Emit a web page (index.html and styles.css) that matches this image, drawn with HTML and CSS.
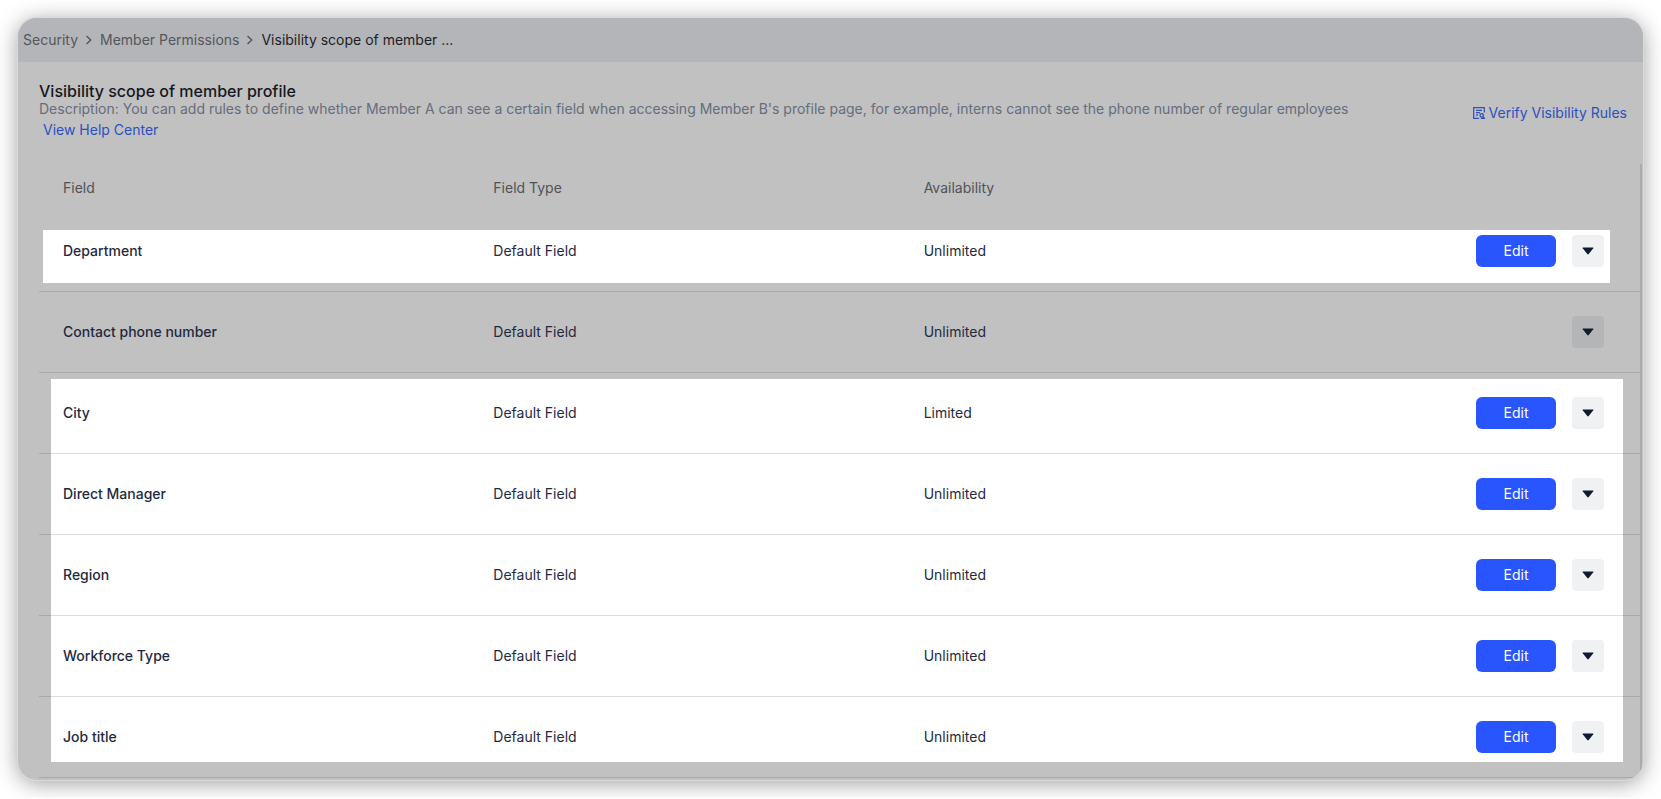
FILE: index.html
```html
<!DOCTYPE html>
<html lang="en">
  <head>
    <meta charset="utf-8">
    <title>Visibility scope of member profile</title>
    <link rel="stylesheet" href="styles.css">
  </head>
  <body>
    <main class="window">
      <nav class="crumbs" aria-label="Breadcrumb">
        <a href="#">Security</a>
        <svg class="chevron" viewBox="0 0 8 10"><path d="M1.5 1l4.2 4-4.2 4"/></svg>
        <a href="#">Member Permissions</a>
        <svg class="chevron" viewBox="0 0 8 10"><path d="M1.5 1l4.2 4-4.2 4"/></svg>
        <span class="current">Visibility scope of member ...</span>
      </nav>
      <header class="head">
        <div class="intro">
          <h1>Visibility scope of member profile</h1>
          <p>Description: You can add rules to define whether Member A can see a certain field when accessing Member B's profile page, for example, interns cannot see the phone number of regular employees</p>
          <a class="help" href="#">View Help Center</a>
        </div>
        <a class="verify" href="#">
          <svg viewBox="0 0 12 12"><path d="M11.3 5.5V.7H.7v10.6h5.2M3 3.3h6M3 5.6h4M3 7.9h2"/><circle cx="8.7" cy="8.4" r="1.7"/><path d="M9.9 9.7l1.7 1.7H8"/></svg>
          Verify Visibility Rules
        </a>
      </header>
      <div class="list">
        <div class="spot spot-first"></div>
        <div class="spot spot-rest"></div>
        <table>
          <thead>
            <tr><th>Field</th><th>Field Type</th><th>Availability</th><th class="tools"></th></tr>
          </thead>
          <tbody>
            <tr>
              <td class="name">Department</td><td>Default Field</td><td>Unlimited</td>
              <td class="tools"><div class="actions"><button class="edit">Edit</button><button class="more" aria-label="More"><svg viewBox="0 0 12 8"><path d="M1 .5h10q.8 0 .3.7L6.7 7q-.7.8-1.4 0L.7 1.2Q.2.5 1 .5z"/></svg></button></div></td>
            </tr>
            <tr>
              <td class="name">Contact phone number</td><td>Default Field</td><td>Unlimited</td>
              <td class="tools"><div class="actions"><button class="more dim" aria-label="More"><svg viewBox="0 0 12 8"><path d="M1 .5h10q.8 0 .3.7L6.7 7q-.7.8-1.4 0L.7 1.2Q.2.5 1 .5z"/></svg></button></div></td>
            </tr>
            <tr>
              <td class="name">City</td><td>Default Field</td><td>Limited</td>
              <td class="tools"><div class="actions"><button class="edit">Edit</button><button class="more" aria-label="More"><svg viewBox="0 0 12 8"><path d="M1 .5h10q.8 0 .3.7L6.7 7q-.7.8-1.4 0L.7 1.2Q.2.5 1 .5z"/></svg></button></div></td>
            </tr>
            <tr>
              <td class="name">Direct Manager</td><td>Default Field</td><td>Unlimited</td>
              <td class="tools"><div class="actions"><button class="edit">Edit</button><button class="more" aria-label="More"><svg viewBox="0 0 12 8"><path d="M1 .5h10q.8 0 .3.7L6.7 7q-.7.8-1.4 0L.7 1.2Q.2.5 1 .5z"/></svg></button></div></td>
            </tr>
            <tr>
              <td class="name">Region</td><td>Default Field</td><td>Unlimited</td>
              <td class="tools"><div class="actions"><button class="edit">Edit</button><button class="more" aria-label="More"><svg viewBox="0 0 12 8"><path d="M1 .5h10q.8 0 .3.7L6.7 7q-.7.8-1.4 0L.7 1.2Q.2.5 1 .5z"/></svg></button></div></td>
            </tr>
            <tr>
              <td class="name">Workforce Type</td><td>Default Field</td><td>Unlimited</td>
              <td class="tools"><div class="actions"><button class="edit">Edit</button><button class="more" aria-label="More"><svg viewBox="0 0 12 8"><path d="M1 .5h10q.8 0 .3.7L6.7 7q-.7.8-1.4 0L.7 1.2Q.2.5 1 .5z"/></svg></button></div></td>
            </tr>
            <tr>
              <td class="name">Job title</td><td>Default Field</td><td>Unlimited</td>
              <td class="tools"><div class="actions"><button class="edit">Edit</button><button class="more" aria-label="More"><svg viewBox="0 0 12 8"><path d="M1 .5h10q.8 0 .3.7L6.7 7q-.7.8-1.4 0L.7 1.2Q.2.5 1 .5z"/></svg></button></div></td>
            </tr>
          </tbody>
        </table>
      </div>
    </main>
  </body>
</html>
```
FILE: styles.css
```css
*{
  box-sizing: border-box;
}
body{
  margin: 0;
  padding: 18px;
  background: #fff;
  font-family: Inter, "Liberation Sans", sans-serif;
  font-size: 14px;
  line-height: 20px;
  color: #1f2a3f;
}
a{
  color: #2c50c0;
  text-decoration: none;
}
.window{
  overflow: hidden;
  padding-bottom: 2px;
  border-radius: 19px;
  background: #c1c1c1;
  box-shadow: 0 0 0 1px #dadada, 0 3px 22px rgba(0,0,0,0.4);
}
.crumbs{
  display: flex;
  align-items: center;
  gap: 7px;
  height: 44px;
  padding: 0 5px;
  background: #b4b5b8;
}
.crumbs a{
  color: #54575d;
}
.crumbs .current{
  color: #1c1f25;
}
.chevron{
  width: 8px;
  height: 10px;
  fill: none;
  stroke: #54575d;
  stroke-width: 1.4;
}
.head{
  display: flex;
  align-items: center;
  justify-content: space-between;
  padding: 21px 16px 24px 21px;
}
h1{
  margin: 0;
  font-size: 16px;
  line-height: 16px;
  font-weight: 500;
  color: #16181d;
}
p{
  margin: 0 0 1px;
  color: #666d7c;
}
.help{
  margin-left: 4px;
}
.verify{
  display: flex;
  align-items: center;
  gap: 4px;
  margin-top: 2px;
}
.verify svg{
  width: 12px;
  height: 12px;
  fill: none;
  stroke: #2c50c0;
  stroke-width: 1.2;
}
.list{
  position: relative;
  margin: 0 1px 0 21px;
  border-right: 2px solid #aaabac;
}
/* lit areas under the table */
.spot{
  position: absolute;
  background: #fff;
}
.spot-first{
  top: 66px;
  left: 4px;
  right: 30px;
  height: 53px;
}
.spot-rest{
  top: 215px;
  bottom: 16px;
  left: 12px;
  right: 17px;
}
table{
  position: relative;
  width: 100%;
  table-layout: fixed;
  border-collapse: separate;
  border-spacing: 0;
}
th, td{
  padding: 0 24px;
  text-align: left;
}
th{
  height: 47px;
  font-weight: 400;
  color: #505359;
}
td{
  height: 81px;
  border-bottom: 1px solid rgba(31,35,41,0.15);
}
.name{
  font-weight: 500;
}
.tools{
  width: 310px;
  padding-right: 36px;
}
.actions{
  display: flex;
  justify-content: flex-end;
  gap: 16px;
}
button{
  height: 32px;
  padding: 0;
  border: 0;
  border-radius: 6px;
  font: inherit;
}
.edit{
  width: 80px;
  background: #2955ff;
  color: #fff;
}
.more{
  display: flex;
  align-items: center;
  justify-content: center;
  width: 32px;
  border-radius: 4px;
  background: #f0f1f3;
}
.more.dim{
  background: #b4b5b7;
}
.more svg{
  width: 12px;
  height: 8px;
  fill: #101a30;
}
```
